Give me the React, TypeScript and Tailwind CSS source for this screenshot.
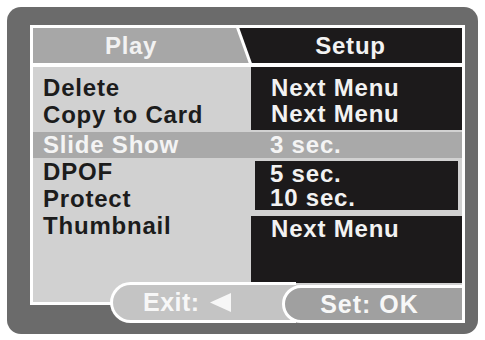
import React from "react";

const font = { fontFamily: '"Liberation Sans", Arial, sans-serif' };

function LeftRow({ label, h = "h-[27px]", hl = false }: { label: string; h?: string; hl?: boolean }) {
  return (
    <div
      className={`${h} flex items-center pl-[10px] text-[24px] font-bold leading-none tracking-[0.8px] ${
        hl ? "bg-[#a9a9a9] text-[#f4f4f4]" : "text-[#1c1c1c]"
      }`}
    >
      {label}
    </div>
  );
}

function RightRow({ label, h = "h-[27px]", pl = "pl-[20px]" }: { label: string; h?: string; pl?: string }) {
  return (
    <div className={`${h} flex items-center ${pl} text-[24px] font-bold leading-none tracking-[0.8px] text-[#f2f2f2]`}>
      {label}
    </div>
  );
}

export default function App() {
  return (
    <div className="w-[485px] h-[340px] bg-white pt-[7px] pl-[7px]" style={font}>
      <div className="w-[471px] h-[327px] rounded-[14px] bg-[#6b6b6b] pt-[18px] pl-[23px]">
        {/* bordered screen */}
        <div className="w-[435px] h-[280px] border-[3px] border-white flex flex-col">
          {/* header */}
          <div className="relative h-[35px] flex bg-[#1c1a1b]">
            <div
              className="w-[218px] h-full bg-[#a7a7a7] flex items-center justify-center pr-[22px] text-[24px] font-bold leading-none tracking-[0.6px] text-[#f2f2f2]"
              style={{ clipPath: "polygon(0 0, 204px 0, 218px 100%, 0 100%)" }}
            >
              Play
            </div>
            <div className="flex-1 flex items-center justify-center pr-[12px] text-[24px] font-bold leading-none tracking-[0.8px] text-[#f2f2f2]">
              Setup
            </div>
            <svg className="absolute left-0 top-0" width="429" height="35" viewBox="0 0 429 35">
              <line x1="204" y1="-2" x2="218" y2="37" stroke="white" strokeWidth="3" />
            </svg>
          </div>
          <div className="h-[4px] bg-white" />
          {/* body */}
          <div className="flex-1 flex bg-[#d1d1d1]">
            <div className="w-[218px] flex flex-col pt-[7px]">
              <LeftRow label="Delete" />
              <LeftRow label="Copy to Card" />
              <div className="h-[4px]" />
              <LeftRow label="Slide Show" h="h-[26px]" hl />
              <LeftRow label="DPOF" />
              <LeftRow label="Protect" />
              <LeftRow label="Thumbnail" h="h-[28px]" />
            </div>
            <div className="flex-1 flex flex-col">
              <div className="h-[63px] bg-[#1c1a1b] pt-[7px]">
                <RightRow label="Next Menu" />
                <RightRow label="Next Menu" h="h-[25px]" />
              </div>
              <div className="h-[2px]" />
              <div className="h-[26px] bg-[#a9a9a9]">
                <div className="h-full flex items-center pl-[19px] text-[24px] font-bold leading-none tracking-[0.8px] text-[#f4f4f4]">
                  3 sec.
                </div>
              </div>
              <div className="h-[3px]" />
              <div className="h-[49px] mx-[4px] bg-[#1c1a1b]">
                <RightRow label="5 sec." h="h-[25px]" pl="pl-[15px]" />
                <RightRow label="10 sec." h="h-[24px]" pl="pl-[15px]" />
              </div>
              <div className="h-[6px]" />
              <div className="h-[67px] bg-[#1c1a1b]">
                <RightRow label="Next Menu" h="h-[25px]" />
              </div>
            </div>
          </div>
        </div>
        {/* bottom buttons */}
        <div className="ml-[80px] -mt-[23px] w-[355px] h-[41px] flex">
          <div className="w-[186px] h-[41px] shrink-0 rounded-l-full border-[3px] border-r-0 border-white bg-[#c4c4c4] flex items-center pl-[30px] gap-[10px] text-[25px] font-bold leading-none tracking-[0.5px] text-[#f7f7f7]">
            <span>Exit:</span>
            <svg width="21" height="19" viewBox="0 0 21 19">
              <polygon points="0,9.5 21,0 21,19" fill="#f7f7f7" />
            </svg>
          </div>
          <div className="-ml-[14px] mt-[3px] h-[38px] flex-1 rounded-l-full border-[3px] border-white bg-[#a0a0a0] flex items-center justify-center pr-[8px] text-[25px] font-bold leading-none tracking-[1px] text-[#f7f7f7]">
            Set: OK
          </div>
        </div>
      </div>
    </div>
  );
}
